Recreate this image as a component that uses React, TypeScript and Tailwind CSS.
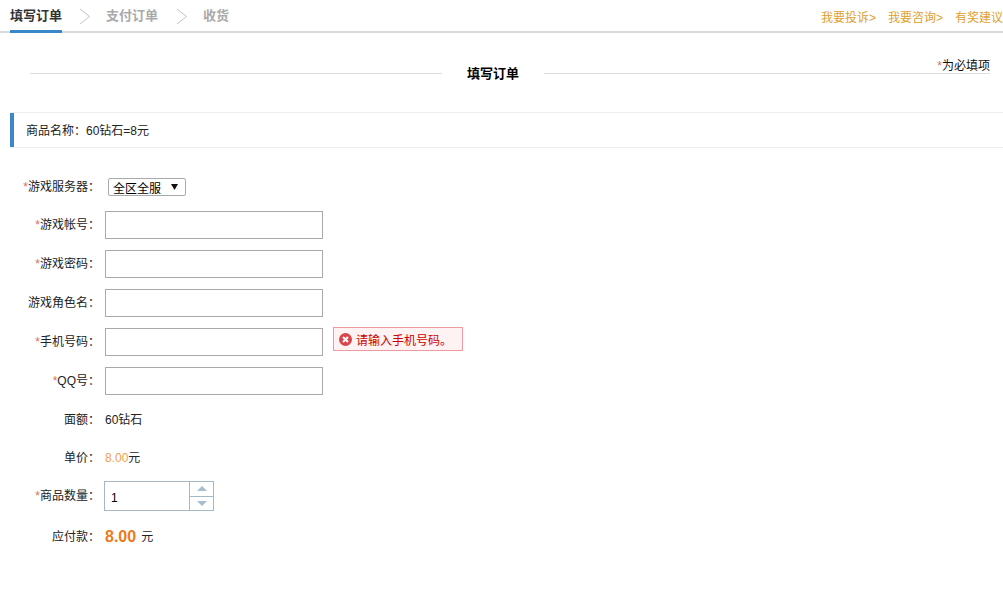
import React from "react";

const font = { fontFamily: '"Liberation Sans", "Noto Sans CJK SC", sans-serif' };

function Chevron() {
  return (
    <svg width="12" height="17" viewBox="0 0 12 17" className="block" aria-hidden="true">
      <path d="M1 1 L10.5 8.5 L1 16" fill="none" stroke="#c4c4c4" strokeWidth="1" />
    </svg>
  );
}

function Label({ req, text, low }: { req?: boolean; text: string; low?: boolean }) {
  return (
    <div className={low ? "w-[100px] shrink-0 mt-[2px] text-right text-[12px] leading-[16px] text-[#222]" : "w-[100px] shrink-0 text-right text-[12px] leading-[16px] text-[#222]"}>
      {req && <span className="text-[#d9705a]">*</span>}
      {text}：
    </div>
  );
}

function InputRow({ req, text, children }: { req?: boolean; text: string; children?: React.ReactNode }) {
  return (
    <div className="flex items-center h-[28px] mb-[11px]">
      <Label req={req} text={text} />
      <div className="ml-[5px] w-[218px] h-[28px] border border-[#a9a9a9] bg-white" />
      {children}
    </div>
  );
}

export default function App() {
  return (
    <div className="w-[1003px] h-[606px] bg-white overflow-hidden" style={font}>
      <div className="flex justify-between h-[33px] border-b-2 border-[#d9d9d9] pl-[10px] pr-0">
        <div className="flex items-start">
          <div className="h-[33px] w-[52px] border-b-[3px] border-[#3a87cc] text-[13px] leading-[32px] font-bold text-[#333] whitespace-nowrap">
            填写订单
          </div>
          <div className="mt-[8px] ml-[17px] mr-[15px]"><Chevron /></div>
          <div className="text-[13px] leading-[32px] font-bold text-[#aaa] whitespace-nowrap">支付订单</div>
          <div className="mt-[8px] ml-[18px] mr-[15px]"><Chevron /></div>
          <div className="text-[13px] leading-[32px] font-bold text-[#aaa] whitespace-nowrap">收货</div>
        </div>
        <div className="flex gap-[12px] text-[12px] leading-[37px] text-[#e0a030] whitespace-nowrap">
          <span>我要投诉&gt;</span>
          <span>我要咨询&gt;</span>
          <span>有奖建议</span>
        </div>
      </div>

      <div className="relative flex items-center h-[20px] mt-[30px] ml-[30px] mr-[13px]">
        <div className="w-[412px] h-px bg-[#dcdcdc]" />
        <div className="w-[102px] pt-[2px] text-center text-[13px] font-bold text-black">填写订单</div>
        <div className="flex-1 h-px bg-[#dcdcdc]" />
        <div className="absolute right-0 top-[-5px] text-[12px] leading-[16px] text-[#111]">
          <span className="text-[#d9705a]">*</span>为必填项
        </div>
      </div>

      <div className="ml-[10px] mt-[29px] h-[36px] border-y border-[#eeeeee] flex items-center">
        <div className="w-[4px] h-[34px] bg-[#3a87cc]" />
        <div className="ml-[12px] pt-[2px] text-[12px] text-[#222]">商品名称：60钻石=8元</div>
      </div>

      <div className="mt-[30px]">
        <div className="flex items-center h-[18px] mb-[15px]">
          <Label req text="游戏服务器" />
          <div className="ml-[8px] w-[78px] h-[18px] border border-[#a9a9a9] rounded-[2px] flex items-center justify-between pl-[4px] pr-[7px] text-[12px] text-black">
            <span className="pt-[3px]">全区全服</span>
            <svg width="7" height="6" viewBox="0 0 7 6" aria-hidden="true"><path d="M0 0 H7 L3.5 6 Z" fill="#111" /></svg>
          </div>
        </div>
        <InputRow req text="游戏帐号" />
        <InputRow req text="游戏密码" />
        <InputRow text="游戏角色名" />
        <InputRow req text="手机号码">
          <div className="ml-[10px] self-start -mt-[1px] w-[130px] h-[24px] border border-[#ee9aa0] bg-[#fff2f2] flex items-center pl-[5px] text-[12px] text-[#cc0000] whitespace-nowrap">
            <svg width="13" height="13" viewBox="0 0 13 13" className="mr-[4px]" aria-hidden="true">
              <circle cx="6.5" cy="6.5" r="6.5" fill="#d9454a" />
              <path d="M4 4 L9 9 M9 4 L4 9" stroke="#fff" strokeWidth="2" />
            </svg>
            <span className="pt-[3px]">请输入手机号码。</span>
          </div>
        </InputRow>
        <div className="flex items-center h-[28px]">
          <Label req text="QQ号" />
          <div className="ml-[5px] w-[218px] h-[28px] border border-[#a9a9a9] bg-white" />
        </div>

        <div className="flex items-center h-[16px] mt-[16px]">
          <Label low text="面额" />
          <div className="ml-[5px] mt-[2px] text-[12px] text-[#222]">60钻石</div>
        </div>
        <div className="flex items-center h-[16px] mt-[22px]">
          <Label low text="单价" />
          <div className="ml-[5px] mt-[2px] text-[12px] text-[#222]"><span className="text-[#f0a050]">8.00</span>元</div>
        </div>
        <div className="flex items-center h-[30px] mt-[16px]">
          <Label req text="商品数量" />
          <div className="ml-[4px] w-[110px] h-[30px] border border-[#a5b8c8] flex">
            <div className="flex-1 pl-[6px] text-[12px] leading-[30px] pt-[1px] text-black">1</div>
            <div className="w-[24px] border-l border-[#a5b8c8] flex flex-col">
              <div className="flex-1 border-b border-[#a5b8c8] flex items-center justify-center">
                <svg width="10" height="5" viewBox="0 0 10 5" aria-hidden="true"><path d="M0 5 L5 0 L10 5 Z" fill="#a9bccb" /></svg>
              </div>
              <div className="flex-1 flex items-center justify-center">
                <svg width="10" height="5" viewBox="0 0 10 5" aria-hidden="true"><path d="M0 0 L10 0 L5 5 Z" fill="#a9bccb" /></svg>
              </div>
            </div>
          </div>
        </div>
        <div className="flex items-center h-[20px] mt-[15px]">
          <Label low text="应付款" />
          <div className="ml-[5px] mt-[2px] text-[12px] text-[#222] flex items-center">
            <span className="text-[16px] font-bold text-[#ee7a1a] mr-[5px]">8.00</span>元
          </div>
        </div>
      </div>
    </div>
  );
}
